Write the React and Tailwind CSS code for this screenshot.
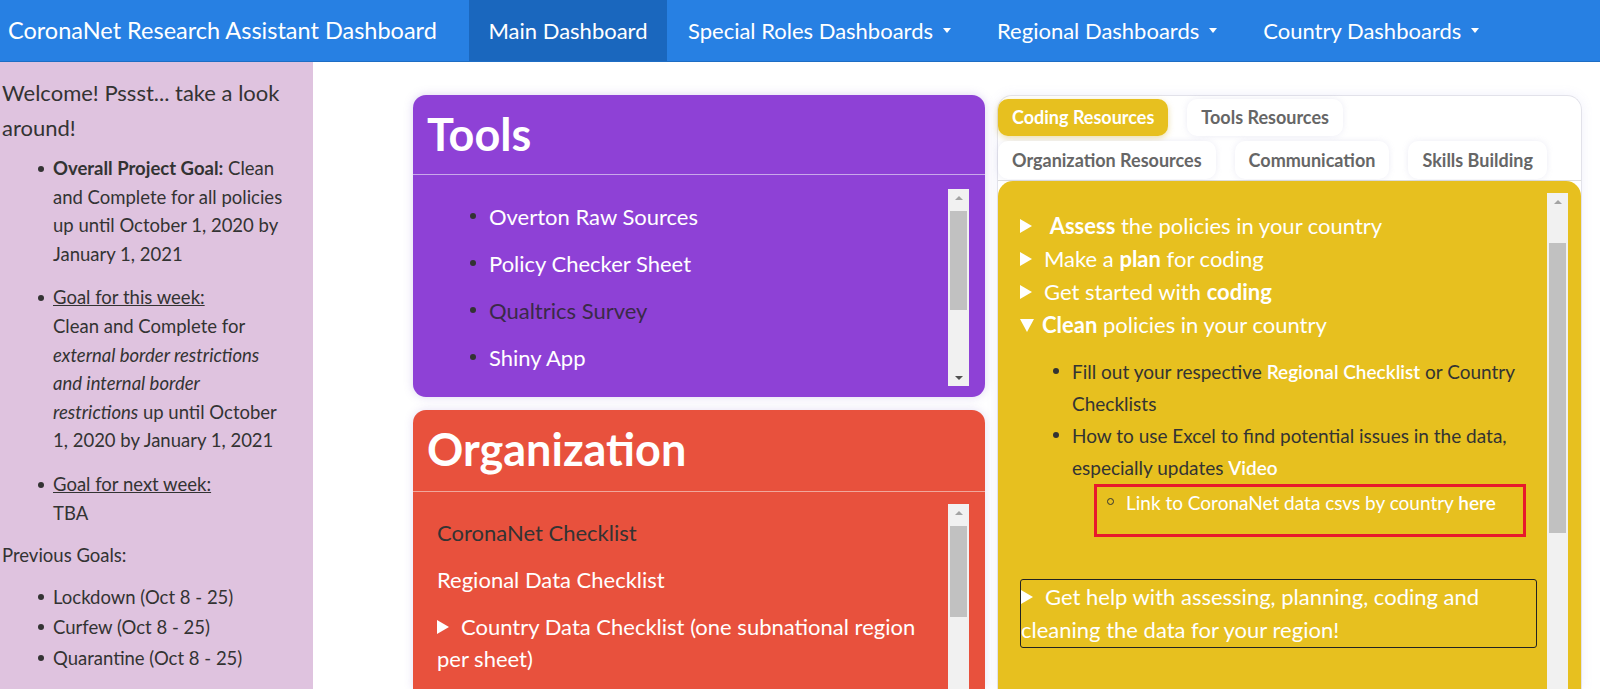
import React from 'react';

function Caret() {
  return <span className="inline-block ml-[10px] w-0 h-0 border-x-[4px] border-x-transparent border-t-[5px] border-t-white" />;
}

function Tri({ down }) {
  if (down) return <span className="inline-block w-0 h-0 border-x-[7px] border-x-transparent border-t-[13px] border-t-white mr-[8px] align-[1px]" />;
  return <span className="inline-block w-0 h-0 border-y-[7px] border-y-transparent border-l-[12px] border-l-white mr-[12px] align-[1px]" />;
}

function Scrollbar({ thumbTop, thumbHeight, bottom = true }) {
  return (
    <div className="w-[21px] shrink-0 bg-[#f1f1f1] flex flex-col items-center">
      <div className="h-[17px] w-full flex items-center justify-center">
        <span className="block w-0 h-0 border-x-[4px] border-x-transparent border-b-[4px] border-b-[#a3a3a3]" />
      </div>
      <div className="flex-1 w-full px-[2px]">
        <div className="w-full bg-[#c1c1c1]" style={{ marginTop: thumbTop, height: thumbHeight }} />
      </div>
      {bottom && (
        <div className="h-[17px] w-full flex items-center justify-center">
          <span className="block w-0 h-0 border-x-[4px] border-x-transparent border-t-[4px] border-t-[#505050]" />
        </div>
      )}
    </div>
  );
}

function Dot() {
  return <span className="block w-[6px] h-[6px] rounded-full bg-[#333] shrink-0" />;
}

export default function App() {
  const navItems = ['Special Roles Dashboards', 'Regional Dashboards', 'Country Dashboards'];
  const tools = [
    { t: 'Overton Raw Sources', c: 'text-white' },
    { t: 'Policy Checker Sheet', c: 'text-white' },
    { t: 'Qualtrics Survey', c: 'text-[#3a2a48]' },
    { t: 'Shiny App', c: 'text-white' },
  ];
  const tab = 'px-[14px] flex items-center rounded-[10px] bg-white shadow-[0_0_6px_rgba(150,150,200,0.18)]';
  return (
    <div className="w-[1600px] h-[689px] overflow-hidden bg-white font-['Lato',sans-serif] text-[#333]">
      <nav className="h-[62px] bg-[#2780e3] border-b border-[#1e6dc4] flex text-white">
        <div className="w-[469px] pl-[8px] flex items-center text-[23.5px]">CoronaNet Research Assistant Dashboard</div>
        <div className="w-[198px] bg-[#1a67be] flex items-center justify-center text-[22px]">Main Dashboard</div>
        <div className="flex items-center text-[22px] gap-[46px] pl-[21px]">
          {navItems.map((n) => (
            <span key={n} className="flex items-center">{n}<Caret /></span>
          ))}
        </div>
      </nav>

      <div className="flex h-[627px]">
        <aside className="w-[313px] shrink-0 bg-[#dfc3df] pl-[2px] pt-[13px] pr-[27px]">
          <p className="text-[22px] leading-[35px] -mr-[21px]">Welcome! Pssst... take a look around!</p>
          <ul className="mt-[9px] text-[18.5px] leading-[28.6px]">
            <li className="flex gap-[9px] pl-[36px]">
              <span className="mt-[12px]"><Dot /></span>
              <span><b>Overall Project Goal:</b> Clean and Complete for all policies up until October 1, 2020 by January 1, 2021</span>
            </li>
            <li className="flex gap-[9px] pl-[36px] mt-[15px]">
              <span className="mt-[12px]"><Dot /></span>
              <span><u>Goal for this week:</u><br />Clean and Complete for <i>external border restrictions and internal border restrictions</i> up until October 1, 2020 by January 1, 2021</span>
            </li>
            <li className="flex gap-[9px] pl-[36px] mt-[15px]">
              <span className="mt-[12px]"><Dot /></span>
              <span><u>Goal for next week:</u><br />TBA</span>
            </li>
          </ul>
          <p className="mt-[14px] text-[18.5px] leading-[28.6px]">Previous Goals:</p>
          <ul className="mt-[12px] text-[18.5px] leading-[30.5px]">
            {['Lockdown (Oct 8 - 25)', 'Curfew (Oct 8 - 25)', 'Quarantine (Oct 8 - 25)'].map((g) => (
              <li key={g} className="flex items-center gap-[9px] pl-[36px]"><Dot />{g}</li>
            ))}
          </ul>
        </aside>

        <main className="flex-1 pl-[100px] pt-[33px] flex gap-[12px]">
          <div className="w-[572px] flex flex-col gap-[13px]">
            <section className="h-[302px] rounded-[13px] bg-[#8e41d6] shadow-[0_0_10px_rgba(120,90,200,0.25)] flex flex-col">
              <div className="h-[80px] border-b border-[#c9a8ea] flex items-center pl-[14px]">
                <h2 className="text-[45px] font-bold text-white leading-none">Tools</h2>
              </div>
              <div className="flex pl-[15px] pr-[16px] pt-[14px]">
                <div className="flex-1 h-[197px] pt-[11px] pl-[42px]">
                  {tools.map((x) => (
                    <div key={x.t} className={`flex items-center gap-[13px] h-[32px] mb-[15px] text-[22px] ${x.c}`}><Dot />{x.t}</div>
                  ))}
                </div>
                <div className="h-[197px] flex"><Scrollbar thumbTop={5} thumbHeight={99} /></div>
              </div>
            </section>

            <section className="flex-1 rounded-t-[13px] bg-[#e8513d] shadow-[0_0_10px_rgba(120,90,200,0.2)] flex flex-col">
              <div className="h-[82px] border-b border-[#f0a79c] flex items-center pl-[14px]">
                <h2 className="text-[45px] font-bold text-white leading-none pb-[2px]">Organization</h2>
              </div>
              <div className="flex pl-[15px] pr-[16px] pt-[12px] flex-1">
                <div className="flex-1 pt-[13px] pl-[9px] pr-[8px] text-[22px] leading-[32px]">
                  <div className="mb-[15px] text-[#333]">CoronaNet Checklist</div>
                  <div className="mb-[15px] text-white">Regional Data Checklist</div>
                  <div className="text-white"><Tri />Country Data Checklist (one subnational region per sheet)</div>
                </div>
                <div className="flex"><Scrollbar thumbTop={5} thumbHeight={91} bottom={false} /></div>
              </div>
            </section>
          </div>

          <div className="w-[585px] rounded-t-[15px] border border-b-0 border-[#e2e2ea] shadow-[0_0_12px_rgba(140,140,220,0.12)] flex flex-col">
            <div className="border-b border-[#dddddd] pt-[3px] pb-[1px] text-[18px] font-bold text-[#666]">
              <div className="flex gap-[19px] h-[37px]">
                <span className="px-[14px] flex items-center rounded-[10px] bg-[#e7c01f] text-white shadow-[0_2px_6px_rgba(200,160,0,0.35)]">Coding Resources</span>
                <span className={tab}>Tools Resources</span>
              </div>
              <div className="flex gap-[19px] h-[38px] mt-[5px]">
                <span className={tab}>Organization Resources</span>
                <span className={tab}>Communication</span>
                <span className={tab}>Skills Building</span>
              </div>
            </div>
            <div className="flex-1 rounded-t-[15px] bg-[#e7c01f] flex pl-[22px] pr-[13px] pt-[12px]">
              <div className="flex-1 text-white pt-[16px]">
                <div className="text-[22px] leading-[33px]">
                  <div><Tri /> <b>Assess</b> the policies in your country</div>
                  <div><Tri />Make a <b>plan</b> for coding</div>
                  <div><Tri />Get started with <b>coding</b></div>
                  <div><Tri down /><b>Clean</b> policies in your country</div>
                </div>
                <ul className="mt-[15px] pl-[33px] pr-[12px] text-[19px] leading-[32px] text-[#333]">
                  <li className="flex gap-[13px]">
                    <span className="mt-[12px]"><Dot /></span>
                    <span>Fill out your respective <span className="text-white font-semibold">Regional Checklist</span> or Country Checklists</span>
                  </li>
                  <li className="flex gap-[13px]">
                    <span className="mt-[12px]"><Dot /></span>
                    <span>How to use Excel to find potential issues in the data, especially updates <span className="text-white font-semibold">Video</span></span>
                  </li>
                </ul>
                <div className="ml-[74px] mr-[21px] h-[53px] border-[3px] border-[#e8192c] pl-[10px] pt-[2px] flex gap-[12px] text-[19px] leading-[28px]">
                  <span className="block mt-[9px] w-[7px] h-[7px] rounded-full border border-[#333] shrink-0" />
                  <span>Link to CoronaNet data csvs by country <span className="text-white font-semibold">here</span></span>
                </div>
                <div className="mt-[42px] mr-[10px] border-[1.5px] border-[#222] rounded-[3px] text-[22px] leading-[33px] pb-[1px]">
                  <Tri />Get help with assessing, planning, coding and cleaning the data for your region!
                </div>
              </div>
              <div className="flex"><Scrollbar thumbTop={33} thumbHeight={290} bottom={false} /></div>
            </div>
          </div>
        </main>
      </div>
    </div>
  );
}
